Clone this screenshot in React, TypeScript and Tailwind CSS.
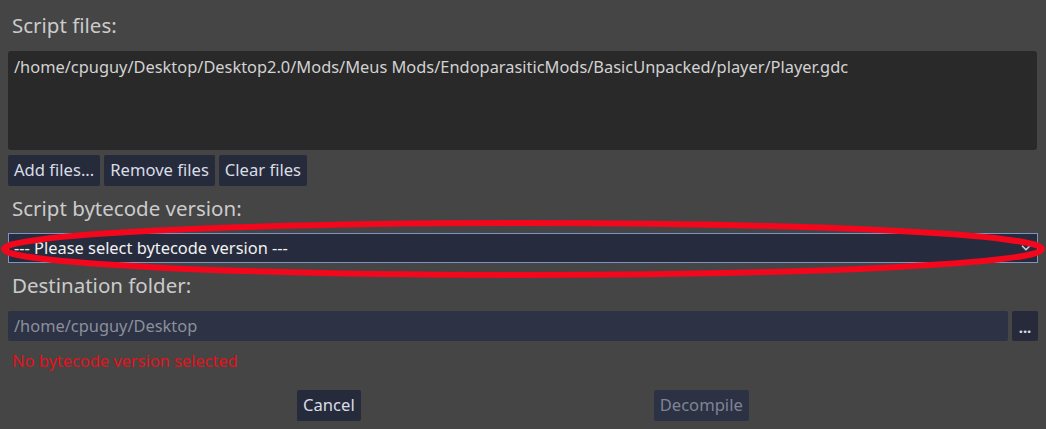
import { ChevronDown } from 'lucide-react';

const font = { fontFamily: '"Noto Sans", "Open Sans", sans-serif' };

function Btn({ label, dim }: { label: string; dim?: boolean }) {
  return (
    <button
      className={`h-[31px] px-[6px] rounded-[2px] text-[16.6px] leading-none ${
        dim ? 'bg-[#2c3143] text-[#7f8594]' : 'bg-[#262b3c] text-[#d9dde5]'
      }`}
    >
      {label}
    </button>
  );
}

export default function App() {
  return (
    <div
      className="relative w-[1046px] h-[429px] overflow-hidden bg-[#454545] text-[#cfcfcf]"
      style={font}
    >
      <div className="flex flex-col px-2">
        {/* Script files */}
        <div className="pl-1 pt-[10px] h-[51px] text-[20.5px] text-[#cbcbcb]">Script files:</div>
        <div className="h-[99px] w-[1029px] rounded-[3px] bg-[#292929] px-[6px] pt-[4px] text-[16.4px] text-[#d2d2d2]">
          /home/cpuguy/Desktop/Desktop2.0/Mods/Meus Mods/EndoparasiticMods/BasicUnpacked/player/Player.gdc
        </div>
        <div className="flex gap-[4px] mt-[5px]">
          <Btn label="Add files..." />
          <Btn label="Remove files" />
          <Btn label="Clear files" />
        </div>

        {/* Bytecode version */}
        <div className="pl-1 pt-[7px] h-[47px] text-[20.5px] text-[#cbcbcb]">Script bytecode version:</div>
        <div className="flex items-center justify-between h-[30px] w-[1030px] border border-[#7d93c6] bg-[#262c3d] pl-[5px] pr-[4px] text-[16.4px] text-[#f2f2f2]">
          <span>--- Please select bytecode version ---</span>
          <ChevronDown className="w-[14px] h-[14px] text-[#c3c8d4]" strokeWidth={3} />
        </div>

        {/* Destination */}
        <div className="pl-1 pt-[7px] h-[48px] text-[20.5px] text-[#cbcbcb]">Destination folder:</div>
        <div className="flex gap-[4px]">
          <div className="flex items-center h-[30px] w-[1000px] rounded-[2px] bg-[#2d3245] px-[6px] text-[16.4px] text-[#8b909c]">
            /home/cpuguy/Desktop
          </div>
          <button className="h-[30px] w-[26px] rounded-[2px] bg-[#262a3a] text-[15px] font-bold text-[#d9dde5] leading-none pt-[3px]">
            ...
          </button>
        </div>
        <div className="pl-1 pt-[8px] text-[16.4px] text-[#e3111a]">No bytecode version selected</div>

        <div className="flex mt-[16px] pl-[289px] gap-[293px]">
          <Btn label="Cancel" />
          <Btn label="Decompile" dim />
        </div>
      </div>

      {/* red annotation ellipse */}
      <svg className="absolute left-0 top-0 pointer-events-none" width="1046" height="429">
        <ellipse cx="523" cy="249" rx="519" ry="26" fill="none" stroke="#f2071c" strokeWidth="6" />
      </svg>
    </div>
  );
}
